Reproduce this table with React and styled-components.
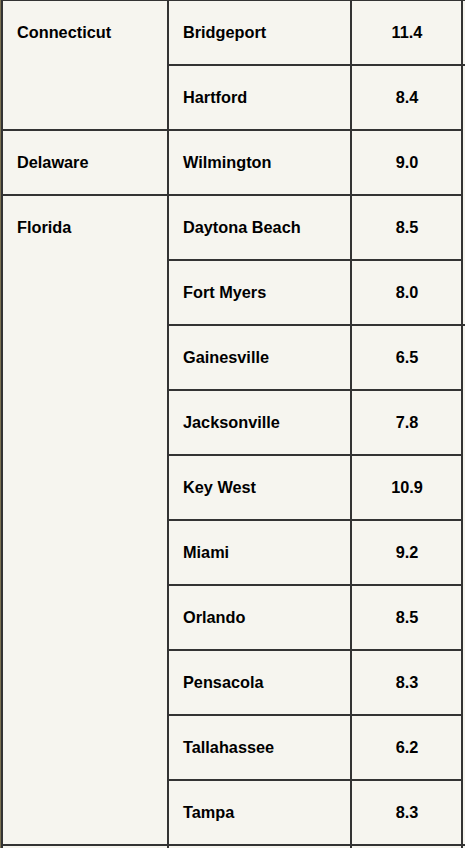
import React from "react";
import styled, { createGlobalStyle } from "styled-components";

const GlobalStyle = createGlobalStyle`
  html, body {
    margin: 0;
    padding: 0;
    background: #7c7253;
    overflow: hidden;
  }
  body {
    font-family: "Liberation Sans", Arial, sans-serif;
  }
`;

const Table = styled.table`
  margin-left: 1px;
  border-collapse: separate;
  border-spacing: 0;
  table-layout: fixed;
  width: 464px;
  background: #f6f5ef;
  border-top: 1px solid #333;
  border-left: 2px solid #333;
  color: #000;
  font-size: 16.3px;
  font-weight: bold;
`;

const Col = styled.col`
  width: ${(p) => p.$w}px;
`;

const Cell = styled.td`
  height: 65px;
  box-sizing: border-box;
  padding: 0 13px 0 14px;
  border-right: 2px solid #333;
  border-bottom: 2px solid #333;
  vertical-align: ${(p) => (p.$top ? "top" : "middle")};
  padding-top: ${(p) => (p.$top ? "22px" : "0")};
  text-align: ${(p) => (p.$center ? "center" : "left")};
  line-height: 19px;
  white-space: nowrap;
`;

// the column cut off at the right edge of the window
const EdgeCell = styled.td`
  padding: 0;
  border-bottom: 2px solid #333;
`;

const data = [
  { state: "Connecticut", cities: [["Bridgeport", "11.4"], ["Hartford", "8.4"]] },
  { state: "Delaware", cities: [["Wilmington", "9.0"]] },
  {
    state: "Florida",
    cities: [
      ["Daytona Beach", "8.5"],
      ["Fort Myers", "8.0"],
      ["Gainesville", "6.5"],
      ["Jacksonville", "7.8"],
      ["Key West", "10.9"],
      ["Miami", "9.2"],
      ["Orlando", "8.5"],
      ["Pensacola", "8.3"],
      ["Tallahassee", "6.2"],
      ["Tampa", "8.3"],
    ],
  },
];

const edgeSpans = { 0: 1, 1: 4, 5: 8 };

export default function App() {
  let rowIndex = 0;
  const rows = [];
  data.forEach((group) => {
    group.cities.forEach(([city, value], i) => {
      const idx = rowIndex++;
      rows.push(
        <tr key={city}>
          {i === 0 && (
            <Cell $top rowSpan={group.cities.length}>
              {group.state}
            </Cell>
          )}
          <Cell>{city}</Cell>
          <Cell $center>{value}</Cell>
          {edgeSpans[idx] && <EdgeCell rowSpan={edgeSpans[idx]} />}
        </tr>
      );
    });
  });

  return (
    <>
      <GlobalStyle />
      <Table>
        <colgroup>
          <Col $w={166} />
          <Col $w={183} />
          <Col $w={111} />
          <Col $w={2} />
        </colgroup>
        <tbody>
          {rows}
          {/* next row, only its top edge shows in the window */}
          <tr>
            <Cell />
            <Cell />
            <Cell />
            <EdgeCell />
          </tr>
        </tbody>
      </Table>
    </>
  );
}
